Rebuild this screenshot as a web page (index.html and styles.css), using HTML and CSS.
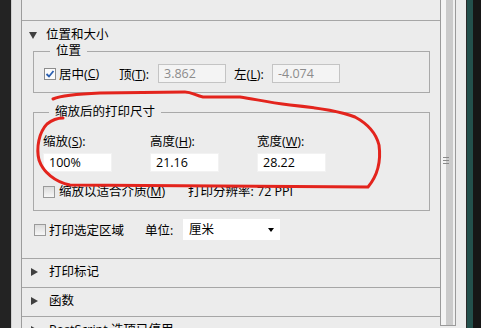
FILE: index.html
```html
<!DOCTYPE html>
<html lang="zh-CN">
<head>
    <meta charset="UTF-8">
    <meta name="viewport" content="width=device-width, initial-scale=1.0">
    <title>打印设置</title>
    <link rel="stylesheet" href="styles.css">
</head>
<body>
    <div class="window">
        <div class="edge-dark"></div>
        <div class="edge-light"></div>

        <!-- Panel de opciones de impresión -->
        <div class="panel">
            <div class="section-top"></div>

            <div class="section open">
                <div class="section-head"><span class="tri-down"></span>位置和大小</div>

                <fieldset class="group group-pos">
                    <legend>位置</legend>
                    <div class="row">
                        <label class="check check-center"><span class="box checked"><svg width="10" height="10" viewBox="0 0 10 10"><path d="M1.5 5 L4 7.5 L8.5 2" fill="none" stroke="#2b5fb0" stroke-width="1.8"/></svg></span>居中(<u>C</u>)</label>
                        <span class="lbl lbl-top">顶(<u>T</u>):</span>
                        <input class="field off" type="text" value="3.862" disabled>
                        <span class="lbl lbl-left">左(<u>L</u>):</span>
                        <input class="field off" type="text" value="-4.074" disabled>
                    </div>
                </fieldset>

                <fieldset class="group group-scale">
                    <legend>缩放后的打印尺寸</legend>
                    <div class="dims">
                        <div class="dim">
                            <span class="lbl">缩放(<u>S</u>):</span>
                            <input class="field" type="text" value="100%">
                        </div>
                        <div class="dim">
                            <span class="lbl">高度(<u>H</u>):</span>
                            <input class="field" type="text" value="21.16">
                        </div>
                        <div class="dim">
                            <span class="lbl">宽度(<u>W</u>):</span>
                            <input class="field" type="text" value="28.22">
                        </div>
                    </div>
                    <div class="row fit-row">
                        <label class="check check-fit"><span class="box"></span>缩放以适合介质(<u>M</u>)</label>
                        <span class="res">打印分辨率: 72 PPI</span>
                    </div>
                </fieldset>

                <div class="row area-row">
                    <label class="check check-area"><span class="box"></span>打印选定区域</label>
                    <span class="lbl unit">单位:</span>
                    <div class="select">厘米<span class="arrow"></span></div>
                </div>
            </div>

            <div class="section-head closed"><span class="tri-right"></span>打印标记</div>
            <div class="section-head closed"><span class="tri-right"></span>函数</div>
            <div class="section-head closed"><span class="tri-right"></span>PostScript 选项已停用</div>
        </div>

        <div class="scrollbar">
            <div class="thumb"><span class="grip"></span></div>
        </div>
        <div class="frame-right"></div>

        <!-- Marca roja dibujada encima -->
        <svg class="markup" width="481" height="328" viewBox="0 0 481 328">
            <path d="M53 99 C60 96 75 94 100 93 L185 92 C192 92 196 96 203 97 L240 97 C255 99 265 102 290 105 C320 108 340 111 355 117 C368 124 376 133 379 145 C381 160 378 175 368 187 L70 185 C55 182 43 172 39 160 C36 148 39 132 47 124 C52 120 57 118 63 118" fill="none" stroke="#e3241d" stroke-width="3" stroke-linecap="round" stroke-linejoin="round"/>
        </svg>
    </div>
</body>
</html>
```

FILE: styles.css
```css
body {
    margin: 0;
    background-color: #161616;
    font-family: "Open Sans", "Noto Sans CJK SC", sans-serif;
    font-size: 12.5px;
    color: #000;
}

.window {
    display: flex;
    width: 481px;
    height: 328px;
    overflow: hidden;
    position: relative; /* para la marca roja */
}

.edge-dark {
    width: 11px;
    flex: none;
    background-color: #232323;
}

.edge-light {
    width: 9px;
    flex: none;
    background-color: #e7e7e7;
    border-left: 1px solid #cfcfcf;
    border-right: 1px solid #9c9c9c;
}

.panel {
    width: 418px;
    flex: none;
    background-color: #ececec;
}

.section-top {
    height: 20px;
    border-bottom: 1px solid #a6a6a6;
}

.section-head {
    display: flex;
    align-items: center;
    line-height: 16px;
    padding: 6px 0 0 7px;
    white-space: nowrap;
}

.section-head.closed {
    height: 23px;
    padding-top: 5px;
    align-items: flex-start;
    border-bottom: 1px solid #a6a6a6;
}

.tri-down {
    width: 0;
    height: 0;
    margin-right: 9px;
    border-left: 4.5px solid transparent;
    border-right: 4.5px solid transparent;
    border-top: 7px solid #404040;
}

.tri-right {
    width: 0;
    height: 0;
    margin: 4px 11px 0 2px;
    border-top: 4.5px solid transparent;
    border-bottom: 4.5px solid transparent;
    border-left: 7px solid #404040;
}

.section.open {
    padding-bottom: 18px;
    border-bottom: 1px solid #a6a6a6;
}

.group {
    margin: 0 10px 0 11px;
    border: 1px solid #a9a9a9;
    min-width: 0;
}

.group legend {
    line-height: 16px;
    padding: 0 6px;
    margin-left: 6px;
}

.group-pos {
    padding: 5px 9px 9px 10px;
}

.group-scale {
    margin-top: 11px;
    padding: 14px 9px 10px 9px;
}

.row {
    display: flex;
    align-items: center;
    white-space: nowrap;
}

.group-pos .row {
    height: 19px;
}

.check {
    display: flex;
    align-items: center;
}

.box {
    width: 10px;
    height: 10px;
    margin-right: 3px;
    border: 1px solid #9a9a9a;
    background: linear-gradient(#dcdcdc, #f7f7f7);
    display: flex;
    align-items: center;
    justify-content: center;
}

.box.checked {
    background: #fbfbfb;
    border-color: #8c8c8c;
}

.check-center {
    width: 75px;
}

.lbl-top {
    width: 39px;
}

.lbl-left {
    width: 38px;
    margin-left: 8px;
}

.field {
    box-sizing: border-box;
    height: 19px;
    width: 69px;
    padding: 0 5px;
    margin: 0;
    border: 1px solid #f2f2f2;
    background-color: #fff;
    font: inherit;
    color: #000;
    outline: none;
}

.field.off {
    width: 68px;
    border-color: #c4c4c4;
    background-color: #f4f4f4;
    color: #8c8c8c;
}

.dims {
    display: flex;
}

.dim {
    width: 107px;
    display: flex;
    flex-direction: column;
    align-items: flex-start;
}

.dim .lbl {
    line-height: 16px;
    margin-bottom: 3px;
}

.fit-row {
    margin-top: 12px;
    line-height: 16px;
}

.check-fit {
    width: 145px;
}

.check-fit .box {
    margin-right: 4px;
}

.area-row {
    margin: 8px 0 0 12px;
    height: 21px;
}

.check-area {
    width: 111px;
}

.unit {
    width: 38px;
}

.select {
    position: relative;
    box-sizing: border-box;
    width: 97px;
    height: 21px;
    line-height: 21px;
    padding-left: 6px;
    background-color: #fff;
}

.arrow {
    position: absolute;
    right: 6px;
    top: 9px;
    width: 0;
    height: 0;
    border-left: 3.5px solid transparent;
    border-right: 3.5px solid transparent;
    border-top: 4px solid #000;
}

.scrollbar {
    width: 16px;
    flex: none;
    background-color: #ececec;
}

.thumb {
    box-sizing: border-box;
    height: 326px;
    border: 1px solid #9a9a9a;
    border-top: none;
    background: linear-gradient(to right, #f4f4f4 0 5px, #cbcbcb 5px 12px, #f0f0f0 12px);
    position: relative;
}

.grip {
    position: absolute;
    left: 2px;
    top: 157px;
    width: 6px;
    height: 7px;
    background: repeating-linear-gradient(#8a8a8a 0 1px, transparent 1px 3px);
}

.frame-right {
    flex: 1;
    background: linear-gradient(to right, #ececec 0 10px, #2b2b2b 10px 11px, #23504c 11px 17px, #161616 17px);
}

.markup {
    position: absolute;
    left: 0;
    top: 0;
    pointer-events: none;
}
```
